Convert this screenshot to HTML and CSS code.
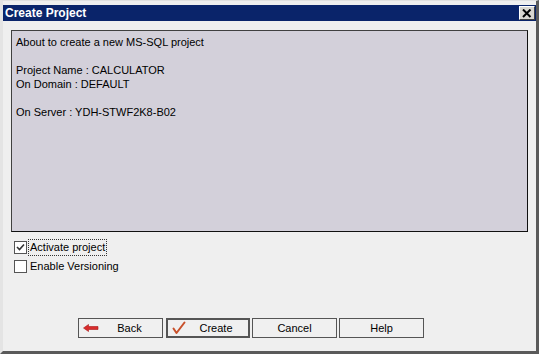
FILE: index.html
```html
<!DOCTYPE html>
<html>
<head>
<meta charset="utf-8">
<link rel="stylesheet" href="styles.css">
</head>
<body>
<div class="window">
  <div class="titlebar">
    <span class="title">Create Project</span>
    <span class="close">
      <svg width="10" height="9" viewBox="0 0 10 9"><path d="M1 0.5 L8.5 8 M8.5 0.5 L1 8" stroke="#000" stroke-width="2" fill="none"/></svg>
    </span>
  </div>
  <div class="content">
    <div class="panel">
      <div class="line">About to create a new MS-SQL project</div>
      <div class="line">&nbsp;</div>
      <div class="line">Project Name : CALCULATOR</div>
      <div class="line">On Domain : DEFAULT</div>
      <div class="line">&nbsp;</div>
      <div class="line">On Server : YDH-STWF2K8-B02</div>
    </div>
    <div class="checks">
      <div class="check">
        <span class="box">
          <svg width="9" height="9" viewBox="0 0 9 9"><path d="M1 4 L3.5 6.5 L8 1.5" stroke="#333" stroke-width="1.6" fill="none"/></svg>
        </span>
        <span class="label focus">Activate project</span>
      </div>
      <div class="check">
        <span class="box"></span>
        <span class="label">Enable Versioning</span>
      </div>
    </div>
    <div class="buttons">
      <div class="btn">
        <svg class="icon" width="16" height="8" viewBox="0 0 16 8"><path d="M0.5 4 L5.5 0.5 L5.5 2.5 L15 2.5 L15 5.5 L5.5 5.5 L5.5 7.5 Z" fill="#d92c2c" stroke="#a81818" stroke-width="0.6"/></svg>
        <span class="btext">Back</span>
      </div>
      <div class="btn default">
        <svg class="icon" width="14" height="14" viewBox="0 0 14 14"><path d="M1.5 7.5 L4.5 12 L12.5 1.5" stroke="#c8502a" stroke-width="2" fill="none" stroke-linecap="round" stroke-linejoin="round"/></svg>
        <span class="btext">Create</span>
      </div>
      <div class="btn"><span class="btext center">Cancel</span></div>
      <div class="btn"><span class="btext center">Help</span></div>
    </div>
  </div>
</div>
</body>
</html>
```

FILE: styles.css
```css
html, body {
  margin: 0;
  padding: 0;
  background: #efefef;
}
.window {
  width: 539px;
  height: 354px;
  box-sizing: border-box;
  background: #efefef;
  border-left: 3px solid #e4e4e4;
  border-right: 3px solid #5a5a5a;
  border-bottom: 3px solid #5a5a5a;
  border-top: 1px solid #e0e0e0;
  padding-top: 4px;
  display: flex;
  flex-direction: column;
  font-family: "Liberation Sans", Arial, sans-serif;
  font-size: 11px;
  color: #000;
}
.titlebar {
  height: 16px;
  background: #0a246a;
  display: flex;
  align-items: center;
  justify-content: space-between;
  padding: 0 1px 0 2px;
}
.title {
  color: #fff;
  font-weight: bold;
  font-family: "Liberation Sans", Arial, sans-serif;
  font-size: 12px;
}
.close {
  width: 16px;
  height: 14px;
  box-sizing: border-box;
  background: #d8d6d0;
  border: 1px solid;
  border-color: #fff #404040 #404040 #fff;
  display: flex;
  align-items: center;
  justify-content: center;
}
.content {
  flex: 1;
  display: flex;
  flex-direction: column;
  padding: 9px 0 0 8px;
}
.panel {
  width: 517px;
  height: 202px;
  box-sizing: border-box;
  background: #d3d0da;
  border: 1px solid #1a1a1a;
  border-color: #404040 #101010 #101010 #404040;
  padding: 4px 0 0 4px;
}
.line {
  height: 14px;
  line-height: 14px;
  white-space: pre;
}
.checks {
  display: flex;
  flex-direction: column;
  gap: 6px;
  padding: 9px 0 0 3px;
}
.check {
  display: flex;
  align-items: center;
  height: 13px;
}
.box {
  width: 11px;
  height: 11px;
  border: 1px solid #555;
  background: #fff;
  display: flex;
  align-items: center;
  justify-content: center;
}
.label {
  margin-left: 1px;
  padding: 1px 1px;
  border: 1px solid transparent;
  line-height: 13px;
}
.label.focus {
  border: 1px dotted #333;
}
.buttons {
  display: flex;
  gap: 2px;
  margin-top: 45px;
  margin-left: 67px;
}
.btn {
  width: 85px;
  height: 20px;
  box-sizing: border-box;
  border: 1px solid #555;
  background: #f0f0f0;
  display: flex;
  align-items: center;
}
.btn.default {
  border: 2px solid #555;
  width: 84px;
  margin-left: 1px;
}
.icon {
  margin-left: 4px;
  flex: none;
}
.btext {
  flex: 1;
  text-align: center;
  padding-right: 2px;
}
.btext.center {
  padding-right: 0;
}
```
